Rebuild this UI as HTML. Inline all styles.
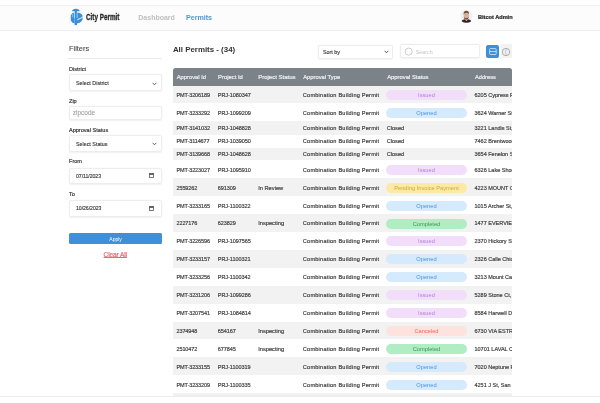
<!DOCTYPE html>
<html><head><meta charset="utf-8">
<style>
html,body{margin:0;padding:0;width:600px;height:403px;overflow:hidden;background:#fff;}
body{position:relative;font-family:"Liberation Sans",sans-serif;color:#333;}
#root{position:absolute;left:0;top:0;width:600px;height:403px;will-change:transform;}
.t{position:absolute;line-height:0;white-space:nowrap;}
.m{-webkit-text-stroke:0.12px currentColor;}
.nav{position:absolute;left:0;top:4.5px;width:600px;height:26.5px;background:#fcfcfc;border-top:1.5px solid #f2f2f2;border-bottom:1.5px solid #efefef;box-sizing:border-box;}
.box{position:absolute;box-sizing:border-box;background:#fff;border:0.7px solid #ededed;border-radius:2px;box-shadow:0 0.6px 1.6px rgba(0,0,0,0.06);}
.lbl{color:#3a3a3a;-webkit-text-stroke:0.2px #3a3a3a;}
.row{position:absolute;left:173px;width:339px;}
.odd{background:#f2f2f2;}
.even{background:#fff;}
.cell{color:#3e3e3e;-webkit-text-stroke:0.18px #3e3e3e;}
.pill{position:absolute;left:386.4px;width:80.2px;height:10px;border-radius:5px;}
.issued{background:#f2defb;color:#b07fd8;}
.opened{background:#d5eafc;color:#4f93d8;}
.pending{background:#fde9a6;color:#cfaa36;}
.completed{background:#b0edc2;color:#379854;}
.canceled{background:#fde2de;color:#e86a5b;}
.hdr{position:absolute;left:173px;top:68px;width:339px;height:17.5px;background:#7b8389;border-radius:2.5px 2.5px 0 0;}
.htxt{color:#f0f2f4;-webkit-text-stroke:0.18px #f0f2f4;}
</style></head><body>
<div id="root">
<div class="nav"></div>
<!-- logo -->
<svg style="position:absolute;left:68px;top:6px" width="18" height="22" viewBox="0 0 18 22">
 <g fill="#3a8fd9">
  <path d="M4 5.3 Q4.4 2.9 7.9 2.8 Q11.4 2.9 11.8 5.3 Z"/>
  <rect x="6.6" y="3" width="2.4" height="16.1"/>
  <path d="M6.6 6.2 L6.6 17.6 Q3.6 17 2.9 14.6 Q2.5 11.9 2.9 9.2 Q3.6 6.8 6.6 6.2 Z"/>
  <path d="M9 6.2 Q14.8 7.1 14.8 11.4 Q14.8 16.2 9 17.6 Z"/>
 </g>
 <g stroke="#fff" fill="none">
  <path d="M9.2 13.9 L15.2 10.9" stroke-width="0.9"/>
  <path d="M6.45 5.8 L6.45 12.2" stroke-width="0.5"/>
  <path d="M9.2 5.8 L9.2 12" stroke-width="0.5"/>
  <path d="M4.6 8 L4.6 11" stroke-width="0.4"/>
 </g>
</svg>
<div class="t " style="left:86.3px;top:17.47px;font-size:9.6px;font-weight:bold;color:#2b2b2b;-webkit-text-stroke:0.35px #2b2b2b;transform:scaleX(0.66);transform-origin:0 0">City Permit</div>
<div class="t " style="left:138.3px;top:17.97px;font-size:7.0px;font-weight:bold;color:#bfbfbf">Dashboard</div>
<div class="t " style="left:186.0px;top:17.94px;font-size:7.1px;font-weight:bold;color:#4d97da">Permits</div>
<!-- avatar -->
<svg style="position:absolute;left:460px;top:9.1px" width="13" height="14" viewBox="0 0 13 14">
 <circle cx="6.4" cy="7" r="6.2" fill="#f1f0f0"/>
 <path d="M1.6 12.3 Q2.4 10.2 6.4 10 Q10.4 10.2 11.2 12.3 Q9.2 13.8 6.4 13.8 Q3.6 13.8 1.6 12.3 Z" fill="#3b1d22"/>
 <path d="M4.6 10.2 L6.4 12 L8.2 10.2 Z" fill="#e9ddd5"/>
 <ellipse cx="6.3" cy="6.6" rx="2.6" ry="3.7" fill="#d8ae9f"/>
 <path d="M3.5 5.6 Q3.4 1.9 6.3 1.8 Q9.2 1.9 9.1 5.6 Q8.6 3.9 6.3 3.8 Q4.2 3.9 3.5 5.6 Z" fill="#6e4c3b"/>
 <path d="M3.7 7.4 Q4 10.4 6.3 10.5 Q8.6 10.4 8.9 7.4 Q8.2 9.3 6.3 9.3 Q4.4 9.3 3.7 7.4 Z" fill="#5e4034"/>
</svg>
<div class="t " style="left:478.0px;top:16.66px;font-size:5.6px;font-weight:bold;color:#222;-webkit-text-stroke:0.2px #222">Bitcot Admin</div>

<!-- sidebar -->
<div class="t m" style="left:69.0px;top:49.04px;font-size:7.4px;color:#4a4a4a">Filters</div>
<div style="position:absolute;left:67.5px;top:58px;width:94.5px;height:1px;background:#e9e9e9"></div>
<div class="t lbl" style="left:69.0px;top:68.68px;font-size:5.55px;">District</div>
<div class="box" style="left:68.5px;top:74px;width:93px;height:16.5px"></div>
<div class="t m" style="left:76.0px;top:82.95px;font-size:5.35px;color:#333">Select District</div>
<svg style="position:absolute;left:152.3px;top:81.6px" width="5" height="4" viewBox="0 0 5 4"><path d="M0.6 0.8 L2.5 2.8 L4.4 0.8" stroke="#555" stroke-width="0.9" fill="none"/></svg>
<div class="t lbl" style="left:69.0px;top:100.88px;font-size:5.55px;">Zip</div>
<div class="box" style="left:68.5px;top:106px;width:93px;height:13.5px"></div>
<div class="t " style="left:72.8px;top:112.95px;font-size:6.5px;color:#9e9e9e;-webkit-text-stroke:0.1px #9e9e9e">zipcode</div>
<div class="t lbl" style="left:69.0px;top:129.88px;font-size:5.55px;">Approval Status</div>
<div class="box" style="left:68.5px;top:134.5px;width:93px;height:17px"></div>
<div class="t m" style="left:76.0px;top:143.95px;font-size:5.35px;color:#333">Select Status</div>
<svg style="position:absolute;left:152.3px;top:141.6px" width="5" height="4" viewBox="0 0 5 4"><path d="M0.6 0.8 L2.5 2.8 L4.4 0.8" stroke="#555" stroke-width="0.9" fill="none"/></svg>
<div class="t lbl" style="left:69.0px;top:161.48px;font-size:5.55px;">From</div>
<div class="box" style="left:68.5px;top:167.5px;width:93px;height:16.5px"></div>
<div class="t m" style="left:76.0px;top:175.90px;font-size:5.2px;color:#333;letter-spacing:-0.06px">07/11/2023</div>
<svg style="position:absolute;left:149.2px;top:173.2px" width="5" height="5" viewBox="0 0 5 5"><rect x="0.5" y="0.5" width="4" height="4" fill="none" stroke="#555" stroke-width="0.8"/><rect x="0.5" y="0.5" width="4" height="1.4" fill="#555"/></svg>
<div class="t lbl" style="left:69.0px;top:193.98px;font-size:5.55px;">To</div>
<div class="box" style="left:68.5px;top:199.5px;width:93px;height:17px"></div>
<div class="t m" style="left:76.0px;top:208.20px;font-size:5.2px;color:#333;letter-spacing:-0.06px">10/26/2023</div>
<svg style="position:absolute;left:149.2px;top:205.8px" width="5" height="5" viewBox="0 0 5 5"><rect x="0.5" y="0.5" width="4" height="4" fill="none" stroke="#555" stroke-width="0.8"/><rect x="0.5" y="0.5" width="4" height="1.4" fill="#555"/></svg>
<div style="position:absolute;left:68.8px;top:233px;width:93px;height:11.2px;background:#3f8fd9;border-radius:1.5px"></div>
<div class="t " style="left:109.3px;top:238.87px;font-size:5.0px;color:#fff">Apply</div>
<div class="t " style="left:103.6px;top:254.75px;font-size:6.5px;letter-spacing:-0.1px;color:#e66b74;-webkit-text-stroke:0.22px #e66b74;text-decoration:underline;text-decoration-thickness:0.7px;text-underline-offset:0.4px">Clear All</div>

<!-- main header -->
<div class="t " style="left:172.9px;top:50.46px;font-size:7.9px;font-weight:bold;color:#333">All Permits - (34)</div>
<div class="box" style="left:318px;top:44.5px;width:75px;height:14px"></div>
<div class="t m" style="left:323.0px;top:51.75px;font-size:5.35px;color:#333">Sort by</div>
<svg style="position:absolute;left:383.8px;top:49.8px" width="5" height="4" viewBox="0 0 5 4"><path d="M0.6 0.8 L2.5 2.8 L4.4 0.8" stroke="#444" stroke-width="0.9" fill="none"/></svg>
<div class="box" style="left:399.6px;top:44.3px;width:80px;height:14.1px"></div>
<svg style="position:absolute;left:404px;top:47.3px" width="10" height="10" viewBox="0 0 10 10"><circle cx="4.7" cy="4.6" r="3.6" fill="none" stroke="#b8b8b8" stroke-width="0.7"/></svg>
<div class="t " style="left:415.8px;top:51.66px;font-size:5.3px;color:#c4c4c4">Search</div>
<div style="position:absolute;left:486.2px;top:45px;width:12.6px;height:13px;background:#3d8fd9;border-radius:2px"></div>
<svg style="position:absolute;left:488.7px;top:48px" width="8" height="7" viewBox="0 0 8 7"><rect x="0.6" y="0.6" width="6.6" height="5.9" rx="0.8" fill="none" stroke="#fff" stroke-width="0.65"/><path d="M0.6 3.55 H7.2" stroke="#fff" stroke-width="0.65"/></svg>
<div style="position:absolute;left:500.8px;top:44.3px;width:11.2px;height:14.2px;background:#f2f2f2;border-radius:1px"></div>
<svg style="position:absolute;left:500.5px;top:46.5px" width="10" height="10" viewBox="0 0 10 10"><circle cx="5" cy="5" r="3.7" fill="none" stroke="#a0a0a0" stroke-width="0.85"/><path d="M5.6 1.4 Q3.6 5 5.2 8.6" stroke="#a8a8a8" stroke-width="0.6" fill="none"/></svg>

<!-- table -->
<div class="hdr"></div>
<div class="t htxt" style="left:176.7px;top:77.19px;font-size:5.8px;">Approval Id</div>
<div class="t htxt" style="left:218.0px;top:77.16px;font-size:5.9px;">Project Id</div>
<div class="t htxt" style="left:258.2px;top:77.12px;font-size:6.0px;">Project Status</div>
<div class="t htxt" style="left:303.2px;top:77.19px;font-size:5.8px;">Approval Type</div>
<div class="t htxt" style="left:387.2px;top:77.17px;font-size:5.85px;">Approval Status</div>
<div class="t htxt" style="left:475.0px;top:77.22px;font-size:5.7px;">Address</div>
<div style="position:absolute;left:173px;top:68px;width:339px;height:340px;overflow:hidden">
<div style="position:absolute;left:-173px;top:-68px;width:600px;height:403px">
<div class="row odd" style="top:85.50px;height:17.92px"></div>
<div class="t cell" style="left:176.5px;top:94.85px;font-size:5.5px;letter-spacing:-0.11px">PMT-3206189</div>
<div class="t cell" style="left:217.8px;top:94.85px;font-size:5.5px;letter-spacing:-0.05px">PRJ-1080347</div>
<div class="t cell" style="left:302.8px;top:94.82px;font-size:5.6px;letter-spacing:0.22px">Combination Building Permit</div>
<div class="pill issued" style="top:89.86px"><div class="t" style="left:0;width:80.2px;text-align:center;top:5.02px;font-size:5.7px">Issued</div></div>
<div class="t cell addr" style="left:474.5px;top:94.85px;font-size:5.5px;">6205 Cypress Point Dr</div>
<div class="row even" style="top:103.42px;height:17.93px"></div>
<div class="t cell" style="left:176.5px;top:112.78px;font-size:5.5px;letter-spacing:-0.11px">PMT-3233292</div>
<div class="t cell" style="left:217.8px;top:112.78px;font-size:5.5px;letter-spacing:-0.05px">PRJ-1099209</div>
<div class="t cell" style="left:302.8px;top:112.74px;font-size:5.6px;letter-spacing:0.22px">Combination Building Permit</div>
<div class="pill opened" style="top:107.79px"><div class="t" style="left:0;width:80.2px;text-align:center;top:5.02px;font-size:5.7px">Opened</div></div>
<div class="t cell addr" style="left:474.5px;top:112.78px;font-size:5.5px;">3624 Warner St, San Diego</div>
<div class="row odd" style="top:121.35px;height:13.30px"></div>
<div class="t cell" style="left:176.5px;top:128.39px;font-size:5.5px;letter-spacing:-0.11px">PMT-3141032</div>
<div class="t cell" style="left:217.8px;top:128.39px;font-size:5.5px;letter-spacing:-0.05px">PRJ-1048828</div>
<div class="t cell" style="left:302.8px;top:128.36px;font-size:5.6px;letter-spacing:0.22px">Combination Building Permit</div>
<div class="t cell" style="left:386.7px;top:128.36px;font-size:5.6px;">Closed</div>
<div class="t cell addr" style="left:474.5px;top:128.39px;font-size:5.5px;">3221 Landis St, San Diego</div>
<div class="row even" style="top:134.65px;height:12.90px"></div>
<div class="t cell" style="left:176.5px;top:141.49px;font-size:5.5px;letter-spacing:-0.11px">PMT-3114677</div>
<div class="t cell" style="left:217.8px;top:141.49px;font-size:5.5px;letter-spacing:-0.05px">PRJ-1039050</div>
<div class="t cell" style="left:302.8px;top:141.46px;font-size:5.6px;letter-spacing:0.22px">Combination Building Permit</div>
<div class="t cell" style="left:386.7px;top:141.46px;font-size:5.6px;">Closed</div>
<div class="t cell addr" style="left:474.5px;top:141.49px;font-size:5.5px;">7462 Brentwood Dr</div>
<div class="row odd" style="top:147.55px;height:12.90px"></div>
<div class="t cell" style="left:176.5px;top:154.39px;font-size:5.5px;letter-spacing:-0.11px">PMT-3139668</div>
<div class="t cell" style="left:217.8px;top:154.39px;font-size:5.5px;letter-spacing:-0.05px">PRJ-1048628</div>
<div class="t cell" style="left:302.8px;top:154.36px;font-size:5.6px;letter-spacing:0.22px">Combination Building Permit</div>
<div class="t cell" style="left:386.7px;top:154.36px;font-size:5.6px;">Closed</div>
<div class="t cell addr" style="left:474.5px;top:154.39px;font-size:5.5px;">3654 Fenelon St</div>
<div class="row even" style="top:160.45px;height:17.90px"></div>
<div class="t cell" style="left:176.5px;top:169.79px;font-size:5.5px;letter-spacing:-0.11px">PMT-3223027</div>
<div class="t cell" style="left:217.8px;top:169.79px;font-size:5.5px;letter-spacing:-0.05px">PRJ-1095910</div>
<div class="t cell" style="left:302.8px;top:169.76px;font-size:5.6px;letter-spacing:0.22px">Combination Building Permit</div>
<div class="pill issued" style="top:164.80px"><div class="t" style="left:0;width:80.2px;text-align:center;top:5.02px;font-size:5.7px">Issued</div></div>
<div class="t cell addr" style="left:474.5px;top:169.79px;font-size:5.5px;">6326 Lake Shore Dr</div>
<div class="row odd" style="top:178.35px;height:17.90px"></div>
<div class="t cell" style="left:176.5px;top:187.69px;font-size:5.5px;letter-spacing:-0.11px">2559262</div>
<div class="t cell" style="left:217.8px;top:187.69px;font-size:5.5px;letter-spacing:-0.05px">691309</div>
<div class="t cell" style="left:258.2px;top:187.62px;font-size:5.7px;">In Review</div>
<div class="t cell" style="left:302.8px;top:187.66px;font-size:5.6px;letter-spacing:0.22px">Combination Building Permit</div>
<div class="pill pending" style="top:182.70px"><div class="t" style="left:0;width:80.2px;text-align:center;top:5.02px;font-size:5.7px">Pending Invoice Payment</div></div>
<div class="t cell addr" style="left:474.5px;top:187.69px;font-size:5.5px;">4223 MOUNT CASTLE AV</div>
<div class="row even" style="top:196.25px;height:17.90px"></div>
<div class="t cell" style="left:176.5px;top:205.59px;font-size:5.5px;letter-spacing:-0.11px">PMT-3233165</div>
<div class="t cell" style="left:217.8px;top:205.59px;font-size:5.5px;letter-spacing:-0.05px">PRJ-1100322</div>
<div class="t cell" style="left:302.8px;top:205.56px;font-size:5.6px;letter-spacing:0.22px">Combination Building Permit</div>
<div class="pill opened" style="top:200.60px"><div class="t" style="left:0;width:80.2px;text-align:center;top:5.02px;font-size:5.7px">Opened</div></div>
<div class="t cell addr" style="left:474.5px;top:205.59px;font-size:5.5px;">1015 Archer St, San Diego</div>
<div class="row odd" style="top:214.15px;height:17.90px"></div>
<div class="t cell" style="left:176.5px;top:223.49px;font-size:5.5px;letter-spacing:-0.11px">2227176</div>
<div class="t cell" style="left:217.8px;top:223.49px;font-size:5.5px;letter-spacing:-0.05px">623829</div>
<div class="t cell" style="left:258.2px;top:223.42px;font-size:5.7px;">Inspecting</div>
<div class="t cell" style="left:302.8px;top:223.46px;font-size:5.6px;letter-spacing:0.22px">Combination Building Permit</div>
<div class="pill completed" style="top:218.50px"><div class="t" style="left:0;width:80.2px;text-align:center;top:5.02px;font-size:5.7px">Completed</div></div>
<div class="t cell addr" style="left:474.5px;top:223.49px;font-size:5.5px;">1477 EVERVIEW RD</div>
<div class="row even" style="top:232.05px;height:17.90px"></div>
<div class="t cell" style="left:176.5px;top:241.39px;font-size:5.5px;letter-spacing:-0.11px">PMT-3226596</div>
<div class="t cell" style="left:217.8px;top:241.39px;font-size:5.5px;letter-spacing:-0.05px">PRJ-1097565</div>
<div class="t cell" style="left:302.8px;top:241.36px;font-size:5.6px;letter-spacing:0.22px">Combination Building Permit</div>
<div class="pill issued" style="top:236.40px"><div class="t" style="left:0;width:80.2px;text-align:center;top:5.02px;font-size:5.7px">Issued</div></div>
<div class="t cell addr" style="left:474.5px;top:241.39px;font-size:5.5px;">2370 Hickory St</div>
<div class="row odd" style="top:249.95px;height:17.90px"></div>
<div class="t cell" style="left:176.5px;top:259.29px;font-size:5.5px;letter-spacing:-0.11px">PMT-3233157</div>
<div class="t cell" style="left:217.8px;top:259.29px;font-size:5.5px;letter-spacing:-0.05px">PRJ-1100321</div>
<div class="t cell" style="left:302.8px;top:259.26px;font-size:5.6px;letter-spacing:0.22px">Combination Building Permit</div>
<div class="pill opened" style="top:254.30px"><div class="t" style="left:0;width:80.2px;text-align:center;top:5.02px;font-size:5.7px">Opened</div></div>
<div class="t cell addr" style="left:474.5px;top:259.29px;font-size:5.5px;">2326 Calle Chiquita</div>
<div class="row even" style="top:267.85px;height:17.90px"></div>
<div class="t cell" style="left:176.5px;top:277.19px;font-size:5.5px;letter-spacing:-0.11px">PMT-3233256</div>
<div class="t cell" style="left:217.8px;top:277.19px;font-size:5.5px;letter-spacing:-0.05px">PRJ-1100342</div>
<div class="t cell" style="left:302.8px;top:277.16px;font-size:5.6px;letter-spacing:0.22px">Combination Building Permit</div>
<div class="pill opened" style="top:272.20px"><div class="t" style="left:0;width:80.2px;text-align:center;top:5.02px;font-size:5.7px">Opened</div></div>
<div class="t cell addr" style="left:474.5px;top:277.19px;font-size:5.5px;">3213 Mount Carol Dr</div>
<div class="row odd" style="top:285.75px;height:17.90px"></div>
<div class="t cell" style="left:176.5px;top:295.09px;font-size:5.5px;letter-spacing:-0.11px">PMT-3231206</div>
<div class="t cell" style="left:217.8px;top:295.09px;font-size:5.5px;letter-spacing:-0.05px">PRJ-1099286</div>
<div class="t cell" style="left:302.8px;top:295.06px;font-size:5.6px;letter-spacing:0.22px">Combination Building Permit</div>
<div class="pill issued" style="top:290.10px"><div class="t" style="left:0;width:80.2px;text-align:center;top:5.02px;font-size:5.7px">Issued</div></div>
<div class="t cell addr" style="left:474.5px;top:295.09px;font-size:5.5px;">5289 Stone Ct, San Diego</div>
<div class="row even" style="top:303.65px;height:17.90px"></div>
<div class="t cell" style="left:176.5px;top:312.99px;font-size:5.5px;letter-spacing:-0.11px">PMT-3207541</div>
<div class="t cell" style="left:217.8px;top:312.99px;font-size:5.5px;letter-spacing:-0.05px">PRJ-1084814</div>
<div class="t cell" style="left:302.8px;top:312.96px;font-size:5.6px;letter-spacing:0.22px">Combination Building Permit</div>
<div class="pill issued" style="top:308.00px"><div class="t" style="left:0;width:80.2px;text-align:center;top:5.02px;font-size:5.7px">Issued</div></div>
<div class="t cell addr" style="left:474.5px;top:312.99px;font-size:5.5px;">8584 Harwell Dr</div>
<div class="row odd" style="top:321.55px;height:17.90px"></div>
<div class="t cell" style="left:176.5px;top:330.89px;font-size:5.5px;letter-spacing:-0.11px">2374948</div>
<div class="t cell" style="left:217.8px;top:330.89px;font-size:5.5px;letter-spacing:-0.05px">654167</div>
<div class="t cell" style="left:258.2px;top:330.82px;font-size:5.7px;">Inspecting</div>
<div class="t cell" style="left:302.8px;top:330.86px;font-size:5.6px;letter-spacing:0.22px">Combination Building Permit</div>
<div class="pill canceled" style="top:325.90px"><div class="t" style="left:0;width:80.2px;text-align:center;top:5.02px;font-size:5.7px">Canceled</div></div>
<div class="t cell addr" style="left:474.5px;top:330.89px;font-size:5.5px;">6730 VIA ESTRADA</div>
<div class="row even" style="top:339.45px;height:17.90px"></div>
<div class="t cell" style="left:176.5px;top:348.79px;font-size:5.5px;letter-spacing:-0.11px">2510472</div>
<div class="t cell" style="left:217.8px;top:348.79px;font-size:5.5px;letter-spacing:-0.05px">677845</div>
<div class="t cell" style="left:258.2px;top:348.72px;font-size:5.7px;">Inspecting</div>
<div class="t cell" style="left:302.8px;top:348.76px;font-size:5.6px;letter-spacing:0.22px">Combination Building Permit</div>
<div class="pill completed" style="top:343.80px"><div class="t" style="left:0;width:80.2px;text-align:center;top:5.02px;font-size:5.7px">Completed</div></div>
<div class="t cell addr" style="left:474.5px;top:348.79px;font-size:5.5px;">10701 LAVAL CT</div>
<div class="row odd" style="top:357.35px;height:17.90px"></div>
<div class="t cell" style="left:176.5px;top:366.69px;font-size:5.5px;letter-spacing:-0.11px">PMT-3233155</div>
<div class="t cell" style="left:217.8px;top:366.69px;font-size:5.5px;letter-spacing:-0.05px">PRJ-1100319</div>
<div class="t cell" style="left:302.8px;top:366.66px;font-size:5.6px;letter-spacing:0.22px">Combination Building Permit</div>
<div class="pill opened" style="top:361.70px"><div class="t" style="left:0;width:80.2px;text-align:center;top:5.02px;font-size:5.7px">Opened</div></div>
<div class="t cell addr" style="left:474.5px;top:366.69px;font-size:5.5px;">7020 Neptune Pl</div>
<div class="row even" style="top:375.25px;height:17.90px"></div>
<div class="t cell" style="left:176.5px;top:384.59px;font-size:5.5px;letter-spacing:-0.11px">PMT-3233209</div>
<div class="t cell" style="left:217.8px;top:384.59px;font-size:5.5px;letter-spacing:-0.05px">PRJ-1100335</div>
<div class="t cell" style="left:302.8px;top:384.56px;font-size:5.6px;letter-spacing:0.22px">Combination Building Permit</div>
<div class="pill opened" style="top:379.60px"><div class="t" style="left:0;width:80.2px;text-align:center;top:5.02px;font-size:5.7px">Opened</div></div>
<div class="t cell addr" style="left:474.5px;top:384.59px;font-size:5.5px;">4251 J St, San Diego</div>
</div></div>
<div style="position:absolute;left:173px;top:393.2px;width:339px;height:3.8px;background:linear-gradient(#f5f5f5,#ebebeb)"></div>
<div style="position:absolute;left:0;top:395.6px;width:600px;height:1.4px;background:#ececec"></div>
</div>
</body></html>
